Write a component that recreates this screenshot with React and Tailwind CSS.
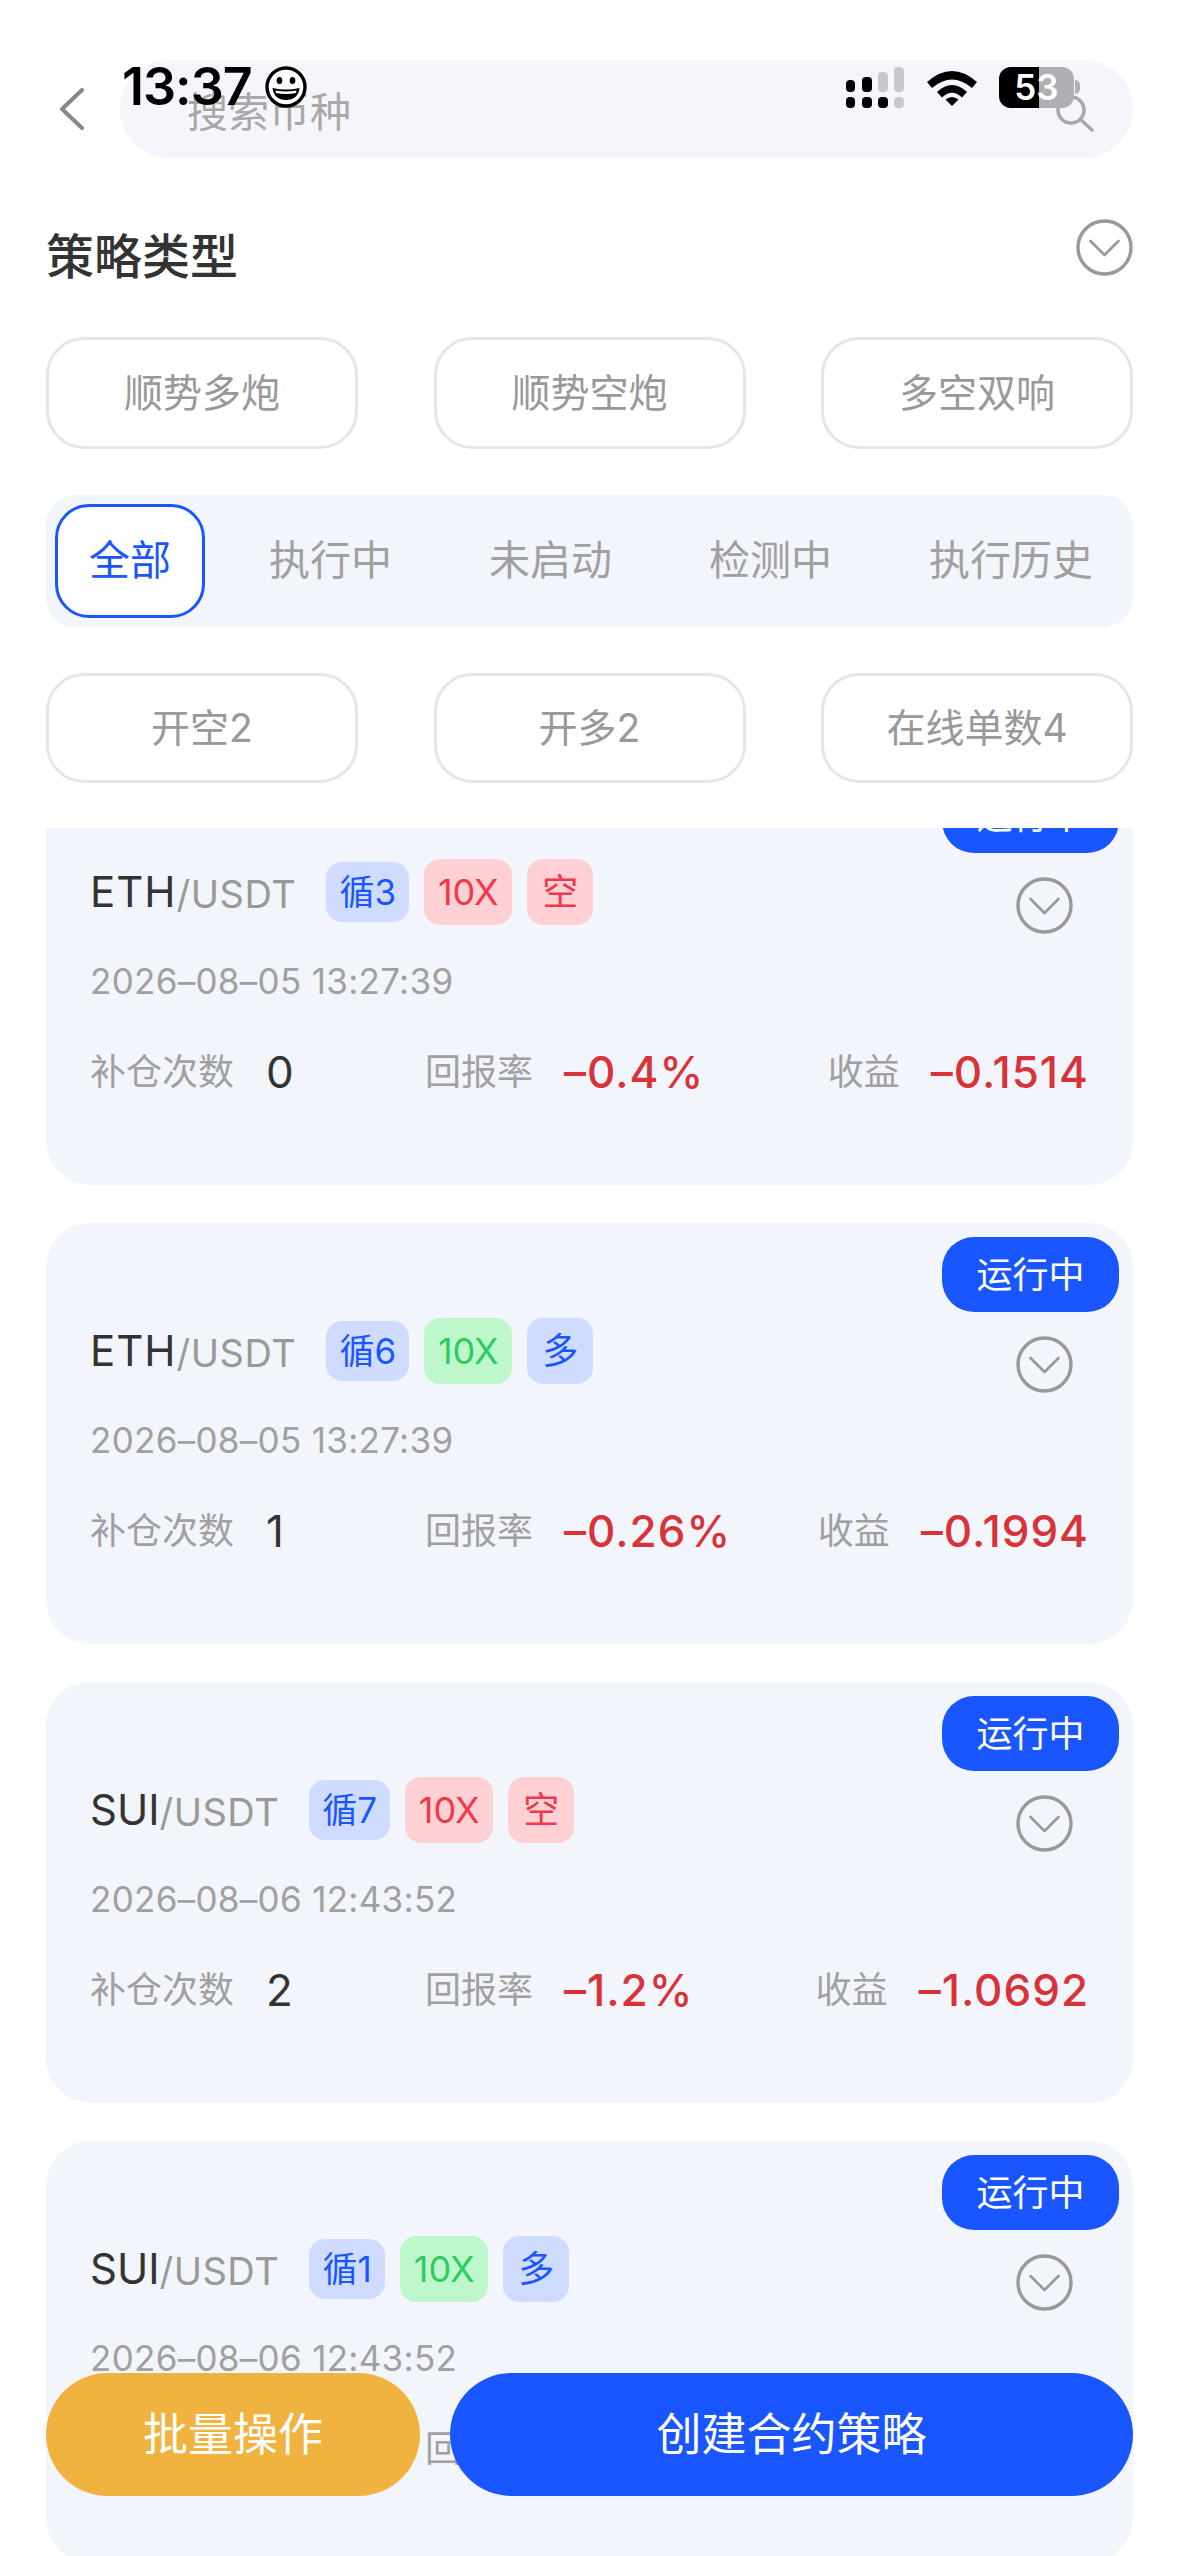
import React from 'react'

const FONT = "font-['Inter','Noto_Sans_CJK_SC',sans-serif]"

const STRATEGY_CHIPS = ['顺势多炮', '顺势空炮', '多空双响']
const COUNT_CHIPS = ['开空2', '开多2', '在线单数4']
const TABS = ['全部', '执行中', '未启动', '检测中', '执行历史']

const TAG_COLORS = {
  blue: 'bg-[#cfdcff] text-[#1a56ff]',
  red: 'bg-[#ffd0d4] text-[#f0384c]',
  green: 'bg-[#bff7cd] text-[#2ecc60]',
}

const CARDS = [
  { coin: 'ETH', coinCls: 'tracking-[1px]', loop: '循3', loopW: 'w-[83px]', side: '空', date: '2026–08–05 13:27:39', count: '0', rate: '–0.4%', profit: '–0.1514' },
  { coin: 'ETH', coinCls: 'tracking-[1px]', loop: '循6', loopW: 'w-[83px]', side: '多', date: '2026–08–05 13:27:39', count: '1', rate: '–0.26%', profit: '–0.1994' },
  { coin: 'SUI', coinCls: '', loop: '循7', loopW: 'w-[81px]', side: '空', date: '2026–08–06 12:43:52', count: '2', rate: '–1.2%', profit: '–1.0692' },
  { coin: 'SUI', coinCls: '', loop: '循1', loopW: 'w-[76px]', side: '多', date: '2026–08–06 12:43:52', count: '--', rate: '--', profit: '--' },
]

const ChevronCircle = ({ className = '' }) => (
  <svg viewBox="0 0 57 57" className={`w-[57px] h-[57px] shrink-0 ${className}`} fill="none" stroke="#999999" strokeWidth="3.4">
    <circle cx="28.5" cy="28.5" r="26.5" />
    <path d="M14.5 22 L28.5 36 L42.5 22" strokeLinecap="round" strokeLinejoin="round" strokeWidth="2.6" />
  </svg>
)

const Chip = ({ label, className = 'h-[112px]' }) => (
  <div className={`w-[312px] rounded-[38px] border-[3px] border-[#e6e6e6] bg-white flex items-center justify-center text-[39px] text-[#999999] ${className}`}>
    {label}
  </div>
)

const StatusBar = () => (
  <div className="absolute top-[61px] left-[122px] right-[99px] h-[52px] z-20 flex items-center text-black">
    <span className="text-[52px] font-semibold leading-none tracking-[-1px]">13:37</span>
    {/* smiley */}
    <svg viewBox="0 0 42 42" className="w-[42px] h-[42px] ml-[13px]">
      <circle cx="21" cy="21" r="19" fill="white" stroke="black" strokeWidth="3.4" />
      <ellipse cx="14.5" cy="14.5" rx="2.8" ry="3.6" fill="black" />
      <ellipse cx="27.5" cy="14.5" rx="2.8" ry="3.6" fill="black" />
      <path d="M7.5 22 Q21 25 34.5 22 Q33 34 21 34 Q9 34 7.5 22 Z" fill="black" />
      <path d="M10.5 24.5 Q21 26.5 31.5 24.5 L31 27 Q21 29 11 27 Z" fill="white" />
    </svg>
    <div className="ml-auto flex items-center">
      {/* signal */}
      <svg viewBox="0 0 58 41" className="w-[58px] h-[41px]">
        <rect x="0" y="13" width="9" height="12" rx="4" fill="black" />
        <rect x="16" y="10" width="10" height="15" rx="4" fill="black" />
        <rect x="32" y="5" width="10" height="20" rx="4" fill="#c8c8cc" />
        <rect x="48" y="0" width="10" height="25" rx="4" fill="#c8c8cc" />
        <rect x="0" y="30" width="9" height="11" rx="4" fill="black" />
        <rect x="16" y="30" width="10" height="11" rx="4" fill="black" />
        <rect x="32" y="30" width="10" height="11" rx="4" fill="black" />
        <rect x="48" y="30" width="10" height="11" rx="4" fill="#c8c8cc" />
      </svg>
      {/* wifi */}
      <svg viewBox="0 0 50 37" className="w-[50px] h-[37px] ml-[23px]">
        <path d="M0 13 Q25 -9 50 13 L45 19 Q25 2 5 19 Z" fill="black" />
        <path d="M10 23 Q25 9 40 23 L35 28.5 Q25 19 15 28.5 Z" fill="black" />
        <path d="M18.5 30.5 Q25 25.5 31.5 30.5 L25 37 Z" fill="black" />
      </svg>
      {/* battery */}
      <div className="relative ml-[22px] w-[75px] h-[41px] rounded-[12px] overflow-hidden bg-[#b0b0b4] flex items-center justify-center">
        <div className="absolute inset-y-0 left-0 w-[40px] bg-black" />
        <span className="relative text-[35px] font-semibold leading-none text-white">53</span>
      </div>
      <div className="w-[5px] h-[14px] ml-[1px] rounded-r-full bg-[#b0b0b4]" />
    </div>
  </div>
)

const Card = ({ coin, coinCls, loop, loopW, side, date, count, rate, profit }) => (
  <div className="relative h-[421px] shrink-0 rounded-[44px] bg-[#f3f5fc] pt-[95px] pl-[44px] pr-[44px]">
    <div className="absolute top-[14px] right-[14px] w-[177px] h-[75px] rounded-[32px] bg-[#1a56ff] flex items-center justify-center text-[36px] text-white">
      运行中
    </div>
    <div className="flex items-start justify-between">
      <div className="flex items-center h-[66px]">
        <span className={`text-[42px] text-[#333333] leading-none ${coinCls}`}>{coin}</span>
        <span className="text-[38px] tracking-[0.5px] text-[#999999] leading-none mt-[4px]">/USDT</span>
        <span className={`ml-[30px] h-[60px] rounded-[16px] flex items-center justify-center text-[35px] ${loopW} ${TAG_COLORS.blue}`}>{loop}</span>
        <span className={`ml-[15px] h-[66px] w-[88px] rounded-[16px] flex items-center justify-center text-[36px] ${TAG_COLORS[side === '空' ? 'red' : 'green']}`}>10X</span>
        <span className={`ml-[15px] h-[66px] w-[66px] rounded-[16px] flex items-center justify-center text-[36px] ${TAG_COLORS[side === '空' ? 'red' : 'blue']}`}>{side}</span>
      </div>
      <ChevronCircle className="mt-[18px] mr-[16px]" />
    </div>
    <p className="mt-[25px] h-[44px] leading-[44px] text-[35px] tracking-[0.3px] text-[#a0a0a0]">{date}</p>
    <div className="mt-[41px] h-[56px] flex items-center">
      <div className="w-[335px] flex items-center gap-[32px]">
        <span className="text-[36px] text-[#a0a0a0]">补仓次数</span>
        <span className="text-[44px] text-[#333333]">{count}</span>
      </div>
      <div className="flex items-center gap-[31px]">
        <span className="text-[36px] text-[#a0a0a0]">回报率</span>
        <span className="text-[44px] font-medium tracking-[1px] text-[#d9333a]">{rate}</span>
      </div>
      <div className="ml-auto flex items-center gap-[31px]">
        <span className="text-[36px] text-[#a0a0a0]">收益</span>
        <span className="text-[44px] font-medium tracking-[1px] text-[#d9333a]">{profit}</span>
      </div>
    </div>
  </div>
)

export default function App() {
  return (
    <div className={`relative w-[1179px] h-[2556px] overflow-hidden bg-white ${FONT}`}>
      <StatusBar />

      <div className="relative z-10 bg-white px-[46px] pt-[60px] pb-[45px]">
        <div className="flex items-center h-[98px]">
          <svg viewBox="0 0 26 42" className="w-[26px] h-[42px] ml-[13px]" fill="none" stroke="#888888" strokeWidth="4" strokeLinecap="round" strokeLinejoin="round">
            <path d="M23 2 L3 21 L23 40" />
          </svg>
          <div className="relative ml-[35px] flex-1 h-[98px] rounded-full bg-[#f5f6fc] flex items-center pl-[67px] pt-[8px]">
            <span className="text-[41px] text-[#a8a8a8]">搜索币种</span>
            <svg viewBox="0 0 40 40" className="absolute right-[38px] top-[35px] w-[40px] h-[40px]" fill="none" stroke="#a8a8a8" strokeWidth="3.5" strokeLinecap="round">
              <circle cx="16" cy="15" r="13" />
              <path d="M26 25 L37 35" />
            </svg>
          </div>
        </div>

        <div className="mt-[61px] flex items-start justify-between">
          <h1 className="mt-[9px] text-[48px] leading-[58px] font-medium text-[#333333]">策略类型</h1>
          <ChevronCircle />
        </div>

        <div className="mt-[51px] flex justify-between">
          {STRATEGY_CHIPS.map((c) => <Chip key={c} label={c} />)}
        </div>

        <div className="mt-[46px] h-[132px] rounded-[30px] bg-[#f3f5fc] px-[9px] flex items-center gap-[31px]">
          {TABS.map((t, i) => (
            <div
              key={t}
              className={`h-[114px] rounded-[34px] flex items-center text-[41px] whitespace-nowrap
                ${i === 0 ? 'px-[31px] border-[3px] border-[#1a56ff] text-[#1a56ff] bg-white' : 'px-[33px] text-[#a0a0a0]'}`}
            >
              {t}
            </div>
          ))}
        </div>

        <div className="mt-[46px] flex justify-between">
          {COUNT_CHIPS.map((c) => <Chip key={c} label={c} className="h-[110px]" />)}
        </div>
      </div>

      <div className="-mt-[64px] px-[46px] flex flex-col gap-[38px]">
        {CARDS.map((c, i) => <Card key={i} {...c} />)}
      </div>

      {/* Floating actions */}
      <div className="absolute z-10 left-[46px] right-[46px] bottom-[60px] flex gap-[30px]">
        <button className="w-[374px] h-[123px] rounded-full bg-[#f0b33f] text-[45px] text-white">批量操作</button>
        <button className="flex-1 h-[123px] rounded-full bg-[#1a56ff] text-[45px] text-white">创建合约策略</button>
      </div>
    </div>
  )
}
